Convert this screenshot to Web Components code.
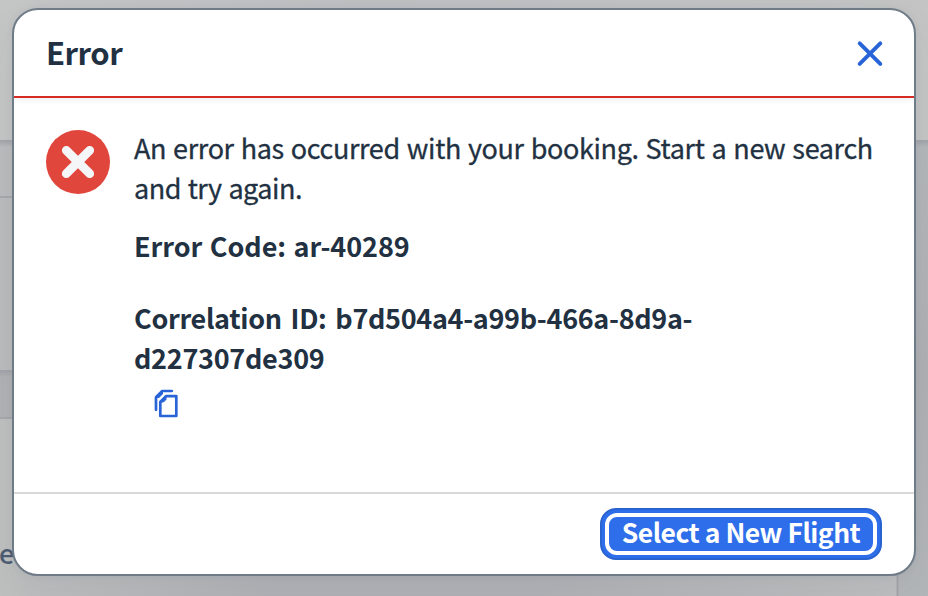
<!DOCTYPE html>
<html lang="en"><head><meta charset="utf-8"><title>Error</title>
<style>
body{margin:0;width:928px;height:596px;overflow:hidden;font-family:"Noto Sans CJK SC","Open Sans",sans-serif;color:#223142}
</style></head><body>
<page-backdrop>
<error-dialog heading="Error">
<error-message slot="body">
<text-line style="--ls:-.37px;--ws:1.3px;--s:.3px">An error has occurred with your booking. Start a new search</text-line>
<text-line style="--ls:-.5px;--ws:1.2px;--s:.3px">and try again.</text-line>
<text-line style="--w:700;--top:18px;--ls:-.05px;--ws:1.5px">Error Code: ar-40289</text-line>
<text-line style="--w:700;--top:32px;--ls:-.32px;--ws:3px">Correlation ID: b7d504a4-a99b-466a-8d9a-</text-line>
<text-line style="--w:700;--ls:-.28px">d227307de309</text-line>
<copy-icon></copy-icon>
</error-message>
<action-button slot="footer">Select a New Flight</action-button>
</error-dialog>
</page-backdrop>
<script>
const define=(name,html)=>customElements.define(name,class extends HTMLElement{
  constructor(){super();this.attachShadow({mode:"open"}).innerHTML=html;}
  connectedCallback(){const h=this.shadowRoot.querySelector("h1");if(h)h.textContent=this.getAttribute("heading");}
});
define("text-line",`<style>:host{display:block;font-size:27px;line-height:40px;height:40px;white-space:nowrap;font-weight:var(--w,400);letter-spacing:var(--ls,0);word-spacing:var(--ws,0);margin-top:var(--top,0);-webkit-text-stroke:var(--s,0px) currentColor}</style><slot></slot>`);
define("copy-icon",`<style>:host{display:block;margin:11px 0 0 20px;height:30px}svg{display:block}</style>
<svg width="26" height="30" viewBox="0 0 26 30" fill="none" stroke="#2864d8" stroke-width="2.7" stroke-linecap="round" stroke-linejoin="round"><path d="M2 20.8V8.2L8.2 2H17.8"/><path d="M9 2V5L5 9H2Z" fill="#2864d8" stroke="none"/><path d="M12 7.1H22.3V27H6.3V13Z"/><path d="M6.2 13H9.5L12 10.5V7.1Z" fill="#2864d8" stroke-width="1"/></svg>`);
define("error-badge",`<style>:host{display:block;flex:none;width:64px;height:64px}</style>
<svg width="64" height="64" viewBox="0 0 64 64"><circle cx="32" cy="32" r="32" fill="#e1463d"/><path d="M20.3 20.3L43.7 43.7M43.7 20.3L20.3 43.7" stroke="#f5f6f8" stroke-width="8.8" stroke-linecap="round"/></svg>`);
define("error-message",`<style>:host{display:flex;gap:24px;padding:32px}.t{min-width:0;margin-top:-2px}</style><error-badge></error-badge><div class="t"><slot></slot></div>`);
define("action-button",`<style>:host{display:block;box-sizing:border-box;width:282px;height:52px;border:2px solid #2863cf;border-radius:16px;background:#2f6eea;padding:3px}
button{display:block;box-sizing:border-box;width:272px;height:42px;padding:0 0 4px;border:4px solid #fff;border-radius:12px;background:#2f6eea;color:#fff;font:700 26.5px/30px "Noto Sans CJK SC",sans-serif;white-space:nowrap;letter-spacing:-.5px}</style><button><slot></slot></button>`);
define("close-icon",`<style>:host{display:block}svg{display:block}</style><svg width="28" height="28" viewBox="0 0 28 28"><path d="M3.7 4.3L24.3 24.9M24.3 4.3L3.7 24.9" stroke="#2864d8" stroke-width="3.9" stroke-linecap="round"/></svg>`);
define("error-dialog",`<style>:host{box-sizing:border-box;width:904px;height:568px;display:flex;flex-direction:column;border:2px solid #707b88;border-radius:26px;background:#fff;overflow:hidden;box-shadow:0 0 6px #7080901c,0 18px 36px #59606a14}
header{box-sizing:border-box;height:88px;flex:none;display:flex;align-items:center;justify-content:space-between;padding:0 30px 0 32px;border-bottom:2px solid #d72c25;box-shadow:0 2px 6px #22354814}
h1{margin:-2px 0 0;font-size:31px;line-height:40px;font-weight:700;letter-spacing:-.5px}
main{flex:1;min-height:0}
footer{box-sizing:border-box;height:82px;flex:none;border-top:2px solid #d9d9d9;display:flex;align-items:center;justify-content:flex-end;padding:0 32px 0 0}</style>
<header><h1></h1><close-icon></close-icon></header><main><slot name="body"></slot></main><footer><slot name="footer"></slot></footer>`);
define("page-backdrop",`<style>:host{display:block;position:relative;width:928px;height:596px;background:#b3b5b9}
svg{position:absolute;inset:0}.d{position:relative;box-sizing:border-box;padding:8px 12px}
.e{position:absolute;left:-1px;top:537px;font-size:27px;line-height:32px;font-weight:500;color:#4b5b72}</style>
<svg width="928" height="596"><defs><linearGradient id="g" x2="1"><stop stop-color="#c4c5c5"/><stop offset=".4" stop-color="#bebfc1"/><stop offset="1" stop-color="#c4c4c4"/></linearGradient>
<linearGradient id="b" x2="1"><stop stop-color="#bebfbf"/><stop offset=".3" stop-color="#b0b1b6"/><stop offset=".6" stop-color="#b0b1b6"/><stop offset="1" stop-color="#bdbebf"/></linearGradient>
<linearGradient id="r" x2="0" y2="1"><stop stop-color="#b3b6b9"/><stop offset=".5" stop-color="#aeafb3"/><stop offset="1" stop-color="#b3b6b8"/></linearGradient>
<linearGradient id="s" x2="0" y2="1"><stop stop-color="#9fa2a8"/><stop offset="1" stop-color="#9fa2a8" stop-opacity="0"/></linearGradient></defs>
<rect width="928" height="141" fill="url(#g)"/><rect y="141" width="14" height="230" fill="#babbbc"/><rect y="371" width="14" height="48" fill="#b0b1b4"/><rect y="419" width="898" height="177" fill="url(#b)"/><rect x="898" y="141" width="30" height="455" fill="url(#r)"/>
<rect y="140" width="928" height="7" fill="url(#s)"/><rect y="370" width="14" height="7" fill="url(#s)"/><path d="M0 197H14M0 418H14" stroke="#a5a7ab" stroke-width="2"/><path d="M897.5 570V596" stroke="#a3a4a8" stroke-width="2"/></svg>
<span class="e">et</span><div class="d"><slot></slot></div>`);
</script></body></html>
